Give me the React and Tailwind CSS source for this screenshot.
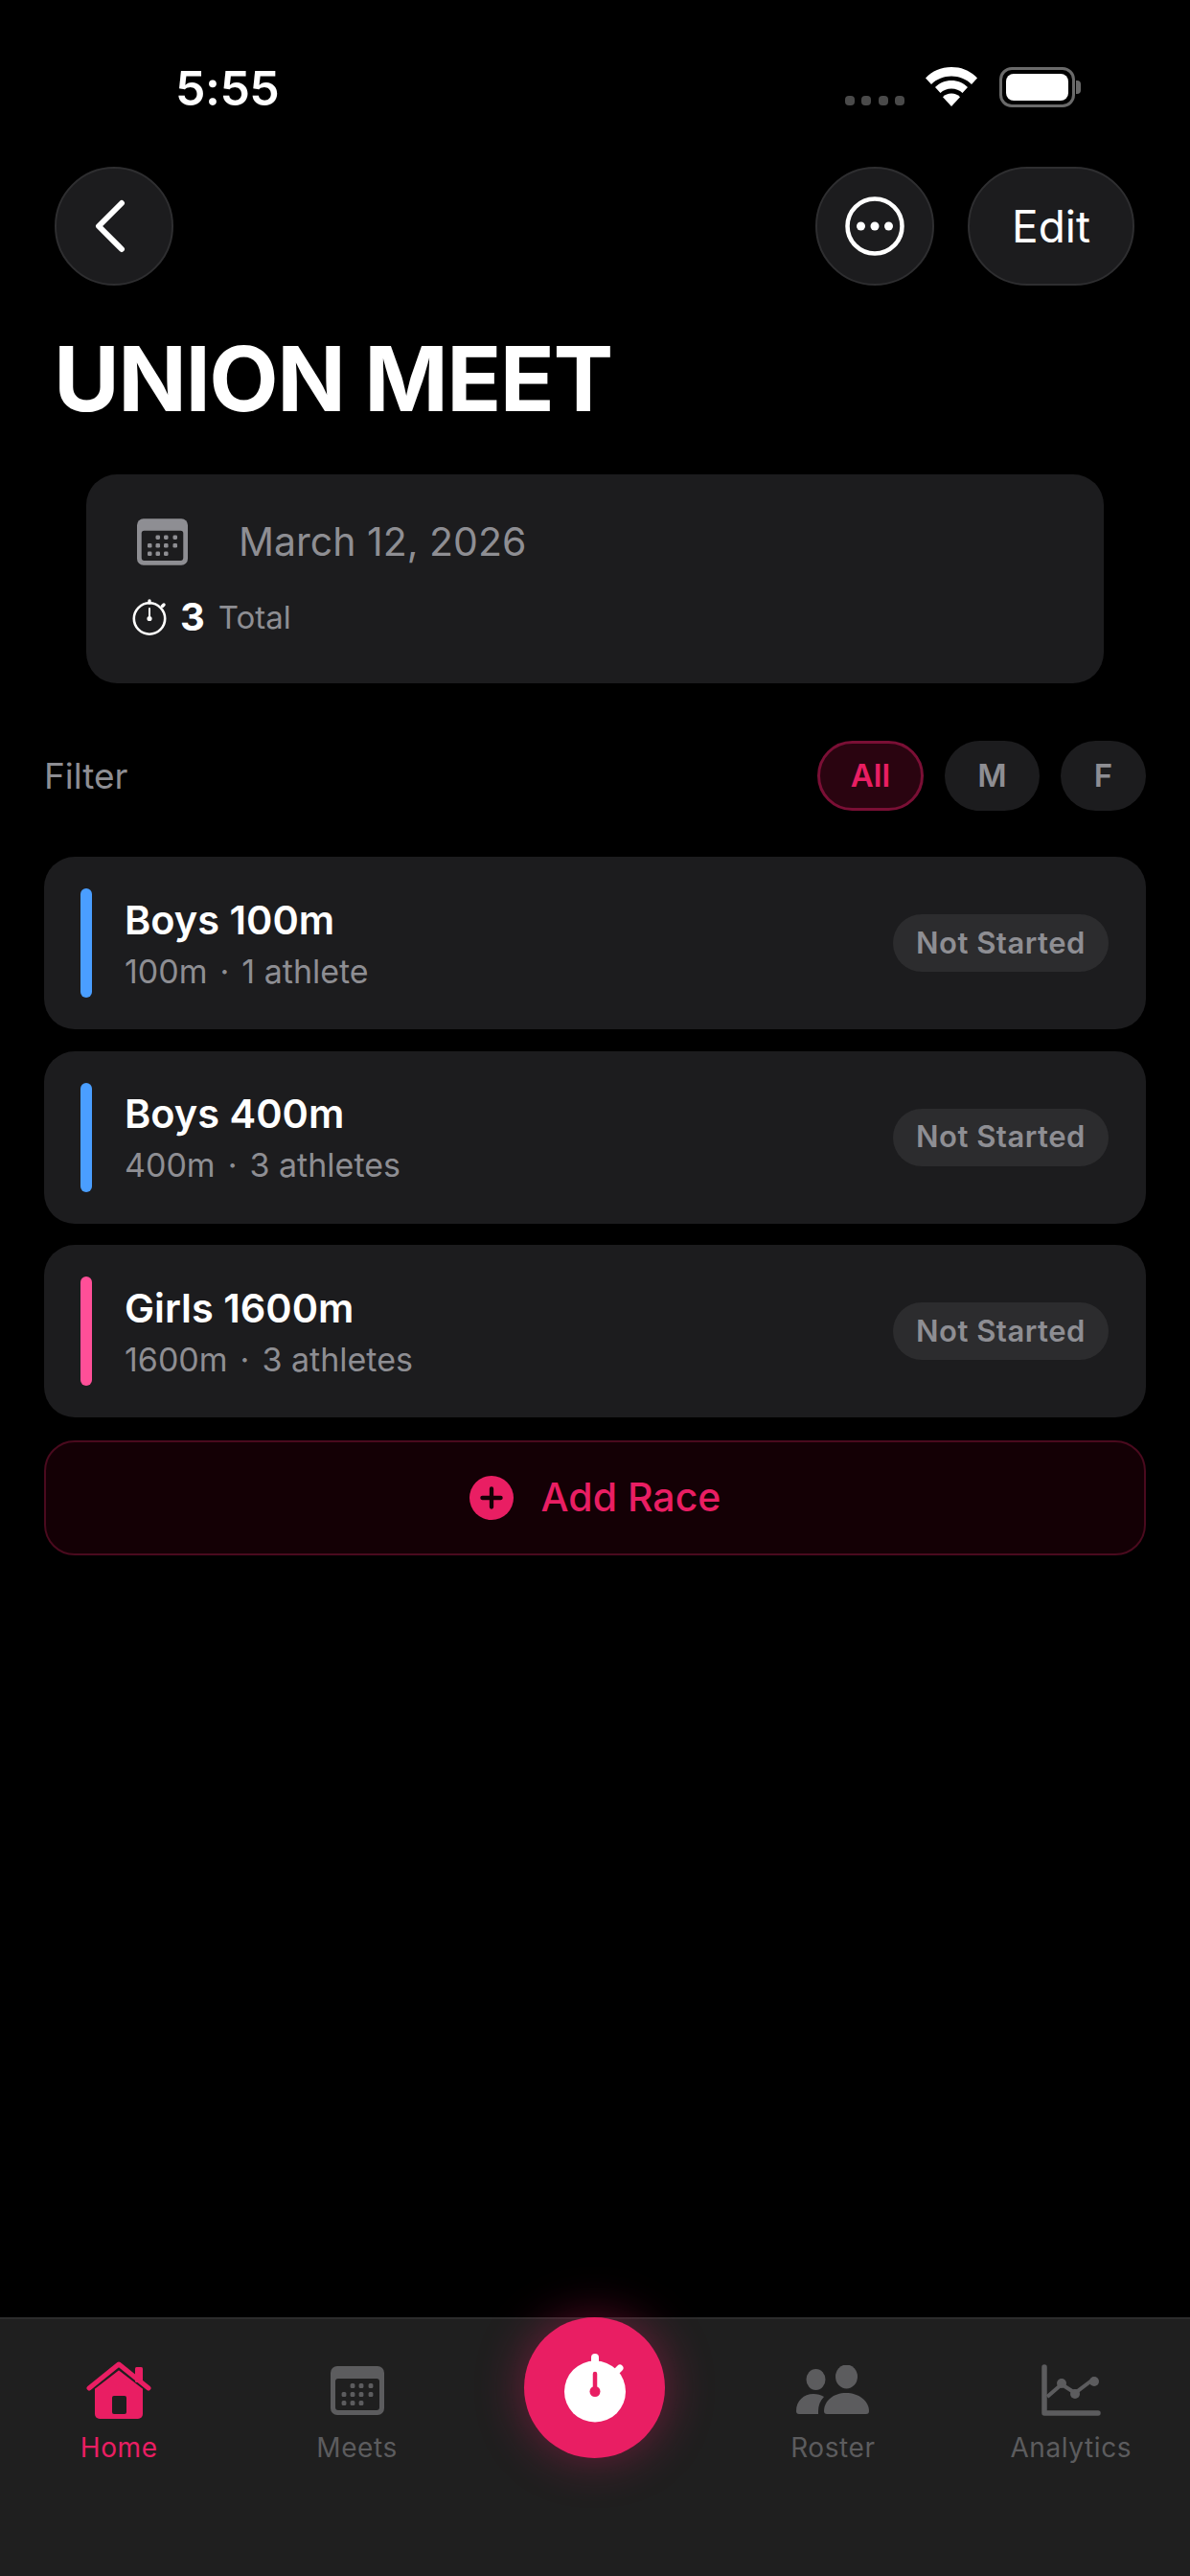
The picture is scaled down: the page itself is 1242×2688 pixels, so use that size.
import React from 'react'
import { ChevronLeft } from 'lucide-react'

const races = [
  { name: 'Boys 100m', distance: '100m', athletes: '1 athlete', color: 'bg-[#4a9eff]' },
  { name: 'Boys 400m', distance: '400m', athletes: '3 athletes', color: 'bg-[#4a9eff]' },
  { name: 'Girls 1600m', distance: '1600m', athletes: '3 athletes', color: 'bg-[#ff4f98]' }
]

// Small calendar, filled header with a dark inset and dots
function CalendarIcon({ className, color, inset }) {
  const dots = [
    [23, 20.5], [32, 20.5], [42, 20.5],
    [14, 29.5], [23, 29.5], [32, 29.5], [42, 29.5],
    [14, 38.5], [23, 38.5], [32, 38.5]
  ]
  return (
    <svg viewBox="0 0 56 51" className={className}>
      <rect x="0" y="0" width="56" height="51" rx="7" fill={color} />
      <rect x="5" y="13" width="46" height="33" rx="3" fill={inset} />
      {dots.map(([x, y]) => (
        <rect key={`${x}-${y}`} x={x - 2.4} y={y - 2.4} width="4.8" height="4.8" rx="1.5" fill={color} />
      ))}
    </svg>
  )
}

function StopwatchOutline({ className }) {
  return (
    <svg viewBox="0 0 36 38" className={className} fill="none" stroke="#fff">
      <circle cx="18" cy="20.5" r="16.200" strokeWidth="2.6" />
      <path d="M18 4V2" strokeWidth="3.4" strokeLinecap="round" />
      <path d="M31.500 7.500l1.500-1.500" strokeWidth="3.4" strokeLinecap="round" />
      <path d="M18 10v10" strokeWidth="2" strokeLinecap="round" />
      <circle cx="18" cy="20.5" r="2.6" fill="#fff" stroke="none" />
    </svg>
  )
}

function StatusBar() {
  return (
    <div className="h-[174px] flex justify-between pl-[183px] pr-[114px] text-white">
      <span className="mt-[63px] text-[50px] leading-[58px] font-semibold tracking-[-0.5px]">5:55</span>
      <div className="flex items-start mt-[70px]">
        <div className="flex gap-[7.5px] mt-[30px] mr-[21px]">
          {[0, 1, 2, 3].map(i => (
            <span key={i} className="w-[10px] h-[10px] rounded-[4px] bg-[#4a4a4a]" />
          ))}
        </div>
        <svg viewBox="0 0 56 42" className="w-[56px] h-[42px] mr-[22px]" fill="#fff">
          <path d="M28 0C17 0 8 4 1 11.5l6 6.5C12.500 12.500 20 9.500 28 9.500S43.500 12.500 49 18l6-6.500C48 4 39 0 28 0z" />
          <path d="M28 14c-6.500 0-12.500 2.500-17 7l5.500 6c3-3 7-4.500 11.500-4.500S36.500 24 39.500 27l5.500-6c-4.500-4.500-10.500-7-17-7z" />
          <path d="M28 27.500c-3.500 0-6.700 1.300-9 3.700L28 41l9-9.800c-2.300-2.400-5.500-3.700-9-3.700z" />
        </svg>
        <div className="flex items-center">
          <div className="w-[79px] h-[42px] rounded-[13px] border-[3px] border-[#6a6a6a] p-[4px]">
            <div className="w-full h-full rounded-[8px] bg-white" />
          </div>
          <div className="w-[5px] h-[14px] ml-[1px] rounded-r-[4px] bg-[#6a6a6a]" />
        </div>
      </div>
    </div>
  )
}

function NavBar() {
  return (
    <div className="flex items-center justify-between pl-[57px] pr-[58px]">
      <button className="w-[124px] h-[124px] rounded-full bg-[#1c1c1e] border-2 border-[#2e2e30] flex items-center justify-center pr-[8px] text-white">
        <ChevronLeft size={96} strokeWidth={1.5} className="shrink-0" />
      </button>
      <div className="flex items-center gap-[35px]">
        <button className="w-[124px] h-[124px] rounded-full bg-[#1c1c1e] border-2 border-[#2e2e30] flex items-center justify-center">
          <svg viewBox="0 0 62 62" className="w-[62px] h-[62px]">
            <circle cx="31" cy="31" r="28.500" fill="none" stroke="#fff" strokeWidth="4.500" />
            <circle cx="16.500" cy="31" r="4.500" fill="#fff" />
            <circle cx="31" cy="31" r="4.500" fill="#fff" />
            <circle cx="45.500" cy="31" r="4.500" fill="#fff" />
          </svg>
        </button>
        <button className="w-[174px] h-[124px] rounded-full bg-[#1c1c1e] border-2 border-[#2e2e30] text-white text-[46px] font-normal">
          Edit
        </button>
      </div>
    </div>
  )
}

function MeetCard() {
  return (
    <div className="mt-[53px] mx-[90px] h-[218px] rounded-[32px] bg-[#1c1c1e] pl-[53px] pt-[45px]">
      <div className="flex items-center">
        <CalendarIcon className="w-[53px] h-[49px]" color="#8e8e93" inset="#1c1c1e" />
        <span className="ml-[53px] text-[41px] leading-[50px] text-[#8e8e93]">March 12, 2026</span>
      </div>
      <div className="flex items-center mt-[30px] -ml-[5px]">
        <StopwatchOutline className="w-[36px] h-[38px]" />
        <span className="ml-[14px] text-[40px] leading-[48px] font-bold text-white">3</span>
        <span className="ml-[14px] text-[33px] leading-[48px] text-[#8e8e93]">Total</span>
      </div>
    </div>
  )
}

function FilterRow() {
  return (
    <div className="mt-[60px] px-[46px] flex items-center justify-between">
      <span className="text-[37px] text-[#8e8e93]">Filter</span>
      <div className="flex items-center gap-[22px]">
        <span className="w-[111px] h-[73px] rounded-full bg-[#2a0410] border-[3px] border-[#7a0f35] flex items-center justify-center text-[33px] font-semibold text-[#e91e63]">All</span>
        <span className="w-[99px] h-[73px] rounded-full bg-[#1c1c1e] flex items-center justify-center text-[33px] font-semibold text-[#8e8e93]">M</span>
        <span className="w-[89px] h-[73px] rounded-full bg-[#1c1c1e] flex items-center justify-center text-[33px] font-semibold text-[#8e8e93]">F</span>
      </div>
    </div>
  )
}

function RaceRow({ race }) {
  return (
    <div className="h-[180px] rounded-[32px] bg-[#1c1c1e] flex items-center pl-[38px] pr-[39px]">
      <div className={`w-[12px] h-[114px] rounded-full ${race.color}`} />
      <div className="ml-[34px] flex-1">
        <div className="text-[41.5px] leading-[50px] font-semibold text-white">{race.name}</div>
        <div className="text-[34px] leading-[40px] mt-[9px] text-[#8e8e93]">
          {race.distance}
          <span className="mx-[13px]">·</span>
          {race.athletes}
        </div>
      </div>
      <span className="w-[225px] h-[60px] rounded-full bg-[#2c2c2e] flex items-center justify-center text-[31px] font-semibold text-[#8e8e93] tracking-[0.5px]">
        Not Started
      </span>
    </div>
  )
}

function TabIcon({ name }) {
  const grey = '#5c5c5e'
  if (name === 'Home') {
    return (
      <svg viewBox="0 0 68 60" className="w-[68px] h-[60px]">
        <path d="M9 24L34 4l25 20v31a5 5 0 0 1-5 5H14a5 5 0 0 1-5-5z" fill="#e91e63" />
        <path d="M3 27L34 3l31 24" fill="none" stroke="#1f1f1f" strokeWidth="10" strokeLinecap="round" strokeLinejoin="round" />
        <rect x="51" y="6" width="8" height="16" rx="1.500" fill="#e91e63" />
        <path d="M3 28L34 3l31 25" fill="none" stroke="#e91e63" strokeWidth="5" strokeLinecap="round" strokeLinejoin="round" />
        <rect x="27" y="36" width="15" height="19" rx="2" fill="#1f1f1f" />
      </svg>
    )
  }
  if (name === 'Meets') {
    return <CalendarIcon className="w-[56px] h-[51px]" color={grey} inset="#1f1f1f" />
  }
  if (name === 'Roster') {
    return (
      <svg viewBox="0 0 76 52" className="w-[76px] h-[52px]" fill={grey}>
        <ellipse cx="20.500" cy="15" rx="10" ry="11" />
        <ellipse cx="52.500" cy="12" rx="11.500" ry="12.500" />
        <path d="M0 48c0-11 8-18 18-18 4 0 8 1 11 3-4 4-6 9-6 15v3H3c-2 0-3-1-3-3z" />
        <path d="M29 48c0-11 10-19 23-19s24 8 24 19c0 2-1 3-3 3H32c-2 0-3-1-3-3z" />
      </svg>
    )
  }
  return (
    <svg viewBox="0 0 62 54" className="w-[62px] h-[54px]" fill="none" stroke={grey}>
      <path d="M3 3v48h56" strokeWidth="5.500" strokeLinecap="round" strokeLinejoin="round" />
      <path d="M6 34l15-13 14 9 20-15" strokeWidth="4" />
      <circle cx="21" cy="20" r="5" fill={grey} stroke="none" />
      <circle cx="35" cy="31" r="5" fill={grey} stroke="none" />
      <circle cx="55" cy="18" r="5" fill={grey} stroke="none" />
    </svg>
  )
}

function TabItem({ name, active }) {
  return (
    <div className="flex flex-col items-center pt-[44px]">
      <div className="h-[60px] flex items-center justify-center"><TabIcon name={name} /></div>
      <span className={`mt-[13px] text-[28px] leading-[34px] tracking-[0.6px] ${active ? 'text-[#e91e63]' : 'text-[#5c5c5e]'}`}>
        {name}
      </span>
    </div>
  )
}

function TabBar() {
  return (
    <div className="mt-auto h-[270px] bg-[#1f1f1f] border-t-2 border-[#2c2c2c] grid grid-cols-5">
      <TabItem name="Home" active />
      <TabItem name="Meets" />
      <div className="flex justify-center">
        <div className="w-[147px] h-[147px] -mt-[2px] rounded-full bg-[#e91e63] shadow-[0_0_50px_rgba(233,30,99,0.4)] flex items-center justify-center">
          <svg viewBox="0 0 66 72" className="w-[66px] h-[72px]">
            <circle cx="33" cy="39.500" r="32" fill="#fff" />
            <path d="M33 4v8" stroke="#fff" strokeWidth="8" strokeLinecap="round" />
            <path d="M59 15l-4 4" stroke="#fff" strokeWidth="7" strokeLinecap="round" />
            <path d="M33 21v18" stroke="#e91e63" strokeWidth="4.500" strokeLinecap="round" />
            <circle cx="33" cy="39.500" r="5.500" fill="#e91e63" />
          </svg>
        </div>
      </div>
      <TabItem name="Roster" />
      <TabItem name="Analytics" />
    </div>
  )
}

export default function App() {
  return (
    <div className="w-[1242px] h-[2688px] bg-black flex flex-col overflow-hidden font-['Inter',sans-serif]">
      <StatusBar />
      <NavBar />
      <h1 className="mt-[50px] pl-[56px] text-[94px] leading-[94px] font-bold text-white tracking-[-1.5px]">UNION MEET</h1>
      <MeetCard />
      <FilterRow />

      <div className="mt-[48px] mx-[46px] flex flex-col gap-[22.500px]">
        {races.map(race => <RaceRow key={race.name} race={race} />)}
      </div>

      <div className="mt-[24px] mx-[46px] h-[120px] rounded-[32px] bg-[#140005] border-2 border-[#4a0a1e] flex items-center justify-center">
        <svg viewBox="0 0 48 48" className="w-[46px] h-[46px]">
          <circle cx="24" cy="24" r="24" fill="#e91e63" />
          <path d="M24 14v20M14 24h20" stroke="#140005" strokeWidth="4.500" strokeLinecap="round" />
        </svg>
        <span className="ml-[29px] text-[41px] font-medium text-[#e91e63]">Add Race</span>
      </div>

      <TabBar />
    </div>
  )
}
